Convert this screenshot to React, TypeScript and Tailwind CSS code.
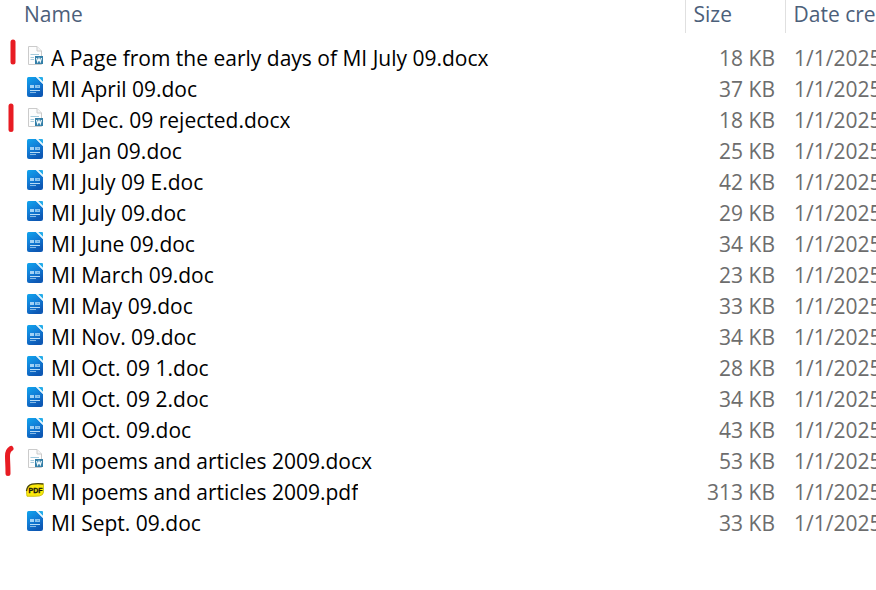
import React from 'react';

type FileKind = 'doc' | 'docx' | 'pdf';

interface FileEntry {
  name: string;
  kind: FileKind;
  size: string;
  mark?: string;
}

const CREATED = '1/1/2025';

// mark = hand-drawn pen stroke in the left margin, in the 20x40 box of the row
const files: FileEntry[] = [
  { name: 'A Page from the early days of MI July 09.docx', kind: 'docx', size: '18 KB', mark: 'M13 3V23' },
  { name: 'MI April 09.doc', kind: 'doc', size: '37 KB' },
  { name: 'MI Dec. 09 rejected.docx', kind: 'docx', size: '18 KB', mark: 'M11 5V28.500' },
  { name: 'MI Jan 09.doc', kind: 'doc', size: '25 KB' },
  { name: 'MI July 09 E.doc', kind: 'doc', size: '42 KB' },
  { name: 'MI July 09.doc', kind: 'doc', size: '29 KB' },
  { name: 'MI June 09.doc', kind: 'doc', size: '34 KB' },
  { name: 'MI March 09.doc', kind: 'doc', size: '23 KB' },
  { name: 'MI May 09.doc', kind: 'doc', size: '33 KB' },
  { name: 'MI Nov. 09.doc', kind: 'doc', size: '34 KB' },
  { name: 'MI Oct. 09 1.doc', kind: 'doc', size: '28 KB' },
  { name: 'MI Oct. 09 2.doc', kind: 'doc', size: '34 KB' },
  { name: 'MI Oct. 09.doc', kind: 'doc', size: '43 KB' },
  { name: 'MI poems and articles 2009.docx', kind: 'docx', size: '53 KB', mark: 'M11 6.500C8.500 8 7.500 10.500 7.500 14C7.500 19 8 23 8 31.500' },
  { name: 'MI poems and articles 2009.pdf', kind: 'pdf', size: '313 KB' },
  { name: 'MI Sept. 09.doc', kind: 'doc', size: '33 KB' },
];

const DocIcon = () => (
  <svg width="20" height="20" viewBox="0 0 20 20" aria-hidden="true">
    <defs>
      <linearGradient id="docFill" x1="0" y1="0" x2="0.5" y2="1">
        <stop offset="0" stopColor="#10a5ee" />
        <stop offset="0.5" stopColor="#127fd8" />
        <stop offset="1" stopColor="#0d58b4" />
      </linearGradient>
    </defs>
    <path d="M3.500 0H11L18 7V18Q18 20 16 20H4Q2 20 2 18V1.500Q2 0 3.500 0Z" fill="url(#docFill)" />
    <path d="M13 0H17Q18 0 18 1V5Z" fill="#27adea" />
    <path d="M11 0H13L18 5V7Z" fill="#e4f5fd" />
    <path d="M5 8H9V11H5Z" fill="#a4d2f5" />
    <path d="M10 8H15V11H10Z" fill="#8cc4ef" />
    <path d="M12 9H14V10H12Z" fill="#5ea9e3" />
    <path d="M5 13.500H15" stroke="#b8dcf6" />
    <path d="M5 15.500H11" stroke="#86b9e6" />
  </svg>
);

const DocxIcon = () => (
  <svg width="20" height="20" viewBox="0 0 20 20" aria-hidden="true">
    <path d="M3.500 0.500H12L16.500 5V18.500H3.500Z" fill="#fdfdfd" stroke="#cbcbcb" />
    <path d="M12 0.500V5H16.500" fill="#f5f5f5" stroke="#cbcbcb" />
    <path d="M5.500 8.500H14M5.500 11.500H9M5.500 13.500H9" stroke="#a4cadc" />
    <rect x="10" y="10" width="8" height="8" fill="#337fa8" />
    <path d="M11.500 12L12.700 15.800L14 12.500L15.300 15.800L16.500 12" fill="none" stroke="#f4fafc" strokeWidth="1.200" />
  </svg>
);

const PdfIcon = () => (
  <svg width="20" height="20" viewBox="0 0 20 20" aria-hidden="true">
    <path d="M2 16.500Q1.500 15 1.500 10Q2 5 7 4Q12 3 18.500 4V12.500Q18 15.500 14.500 16Q10 16.500 2 16.500Z" fill="#fbe90c" />
    <path d="M1.500 11Q2 5.500 7 4.200Q12 3.200 18.500 4" fill="none" stroke="#45410c" strokeWidth="1.300" />
    <path d="M1.500 11Q1.500 15 2 16.200Q10 16.500 14.500 16Q18.500 15 18.500 12V4" fill="none" stroke="#c4b814" strokeWidth="0.800" />
    <text x="10.500" y="13" textAnchor="middle" fontFamily="Liberation Sans, sans-serif" fontSize="7" fontWeight="bold" fill="#17160a" stroke="#17160a" strokeWidth="0.300">
      PDF
    </text>
  </svg>
);

const icons: Record<FileKind, React.FC> = {
  doc: DocIcon,
  docx: DocxIcon,
  pdf: PdfIcon,
};

const FileRow = ({ file }: { file: FileEntry }) => {
  const Icon = icons[file.kind];

  return (
    <tr className="h-[31px]">
      <td className="relative p-0">
        {file.mark && (
          <svg className="absolute top-0 left-0 -mt-1" width="20" height="40" viewBox="0 0 20 40" aria-hidden="true">
            <path d={file.mark} fill="none" stroke="#e81c23" strokeWidth="5" strokeLinecap="round" strokeLinejoin="round" />
          </svg>
        )}
        <div className="flex items-center gap-[6px] pl-[25px]">
          <span className="flex shrink-0 pb-[5px]">
            <Icon />
          </span>
          <span className="truncate text-black">{file.name}</span>
        </div>
      </td>
      <td className="py-0 pr-[10px] pl-0 text-right text-[#6d6d6d]">{file.size}</td>
      <td className="overflow-hidden py-0 pr-0 pl-[9px] text-[#6d6d6d]">{CREATED}</td>
    </tr>
  );
};

const App = () => {
  return (
    <main className="min-h-screen overflow-hidden bg-white">
      <table className="w-full table-fixed border-collapse font-['Open_Sans','Noto_Sans',sans-serif] text-[21px] leading-[31px] whitespace-nowrap">
        <colgroup>
          <col />
          <col className="w-[100px]" />
          <col className="w-[91px]" />
        </colgroup>
        <thead>
          <tr className="text-left text-[#4c607a]">
            <th className="pt-0 pr-0 pb-[5px] pl-6 leading-[28px] font-normal">Name</th>
            <th className="border-l border-[#e0e0e0] pt-0 pr-0 pb-[5px] pl-2 leading-[28px] font-normal">Size</th>
            <th className="overflow-hidden border-l border-[#e0e0e0] pt-0 pr-0 pb-[5px] pl-2 leading-[28px] font-normal">Date cre</th>
          </tr>
        </thead>
        <tbody className="before:block before:h-[10px]">
          {files.map((file) => (
            <FileRow key={file.name} file={file} />
          ))}
        </tbody>
      </table>
    </main>
  );
};

export default App;
